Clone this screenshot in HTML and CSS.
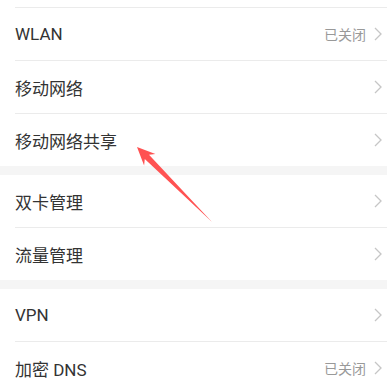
FILE: index.html
```html
<!DOCTYPE html>
<html lang="zh-CN">
<head>
  <meta charset="UTF-8">
  <meta name="viewport" content="width=device-width, initial-scale=1.0">
  <title>网络设置</title>
  <link rel="stylesheet" href="styles.css">
</head>
<body>

<div class="screen">
  <!-- WLAN / 移动网络 -->
  <div class="group first">
    <div class="row">
      <span class="label">WLAN</span>
      <span class="value">已关闭</span>
      <svg class="chevron" viewBox="0 0 8 14"><path d="M1 1 L7 7 L1 13"/></svg>
    </div>
    <div class="row">
      <span class="label">移动网络</span>
      <svg class="chevron" viewBox="0 0 8 14"><path d="M1 1 L7 7 L1 13"/></svg>
    </div>
    <div class="row">
      <span class="label">移动网络共享</span>
      <svg class="chevron" viewBox="0 0 8 14"><path d="M1 1 L7 7 L1 13"/></svg>
    </div>
  </div>

  <div class="gap"></div>

  <!-- 双卡 / 流量 -->
  <div class="group">
    <div class="row">
      <span class="label">双卡管理</span>
      <svg class="chevron" viewBox="0 0 8 14"><path d="M1 1 L7 7 L1 13"/></svg>
    </div>
    <div class="row">
      <span class="label">流量管理</span>
      <svg class="chevron" viewBox="0 0 8 14"><path d="M1 1 L7 7 L1 13"/></svg>
    </div>
  </div>

  <div class="gap"></div>

  <!-- VPN / DNS -->
  <div class="group">
    <div class="row">
      <span class="label">VPN</span>
      <svg class="chevron" viewBox="0 0 8 14"><path d="M1 1 L7 7 L1 13"/></svg>
    </div>
    <div class="row">
      <span class="label">加密 DNS</span>
      <span class="value">已关闭</span>
      <svg class="chevron" viewBox="0 0 8 14"><path d="M1 1 L7 7 L1 13"/></svg>
    </div>
  </div>

  <!-- annotation arrow -->
  <svg class="pointer" viewBox="0 0 387 388">
    <polygon points="137,147 155.4,154.1 149,154.8 212,222 144.8,159 144.1,165.4"/>
  </svg>
</div>

</body>
</html>
```

FILE: styles.css
```css
body {
  margin: 0;
  padding: 0;
  background-color: #fff;
  font-family: Roboto, "Noto Sans CJK SC", sans-serif;
}
.screen {
  position: relative;
  width: 387px;
  height: 388px;
  overflow: hidden;
}
.group.first {
  padding-top: 7px;
}
.group.first .row {
  border-top: 1px solid #ebebeb;
}
.row {
  display: flex;
  align-items: center;
  height: 52px;
  margin-left: 15px;
  padding-right: 5px;
}
.group .row + .row {
  border-top: 1px solid #ebebeb;
}
.label {
  flex: 1;
  font-size: 17px;
  color: #333;
}
.value {
  font-size: 14px;
  color: #999;
  margin-right: 8px;
}
.chevron {
  width: 8px;
  height: 14px;
  fill: none;
  stroke: #c6c6c6;
  stroke-width: 1.3;
}
.gap {
  height: 9px;
  background-color: #f5f5f5;
}
.pointer {
  position: absolute;
  left: 0;
  top: 0;
  width: 387px;
  height: 388px;
  fill: #ff5252;
}
```
